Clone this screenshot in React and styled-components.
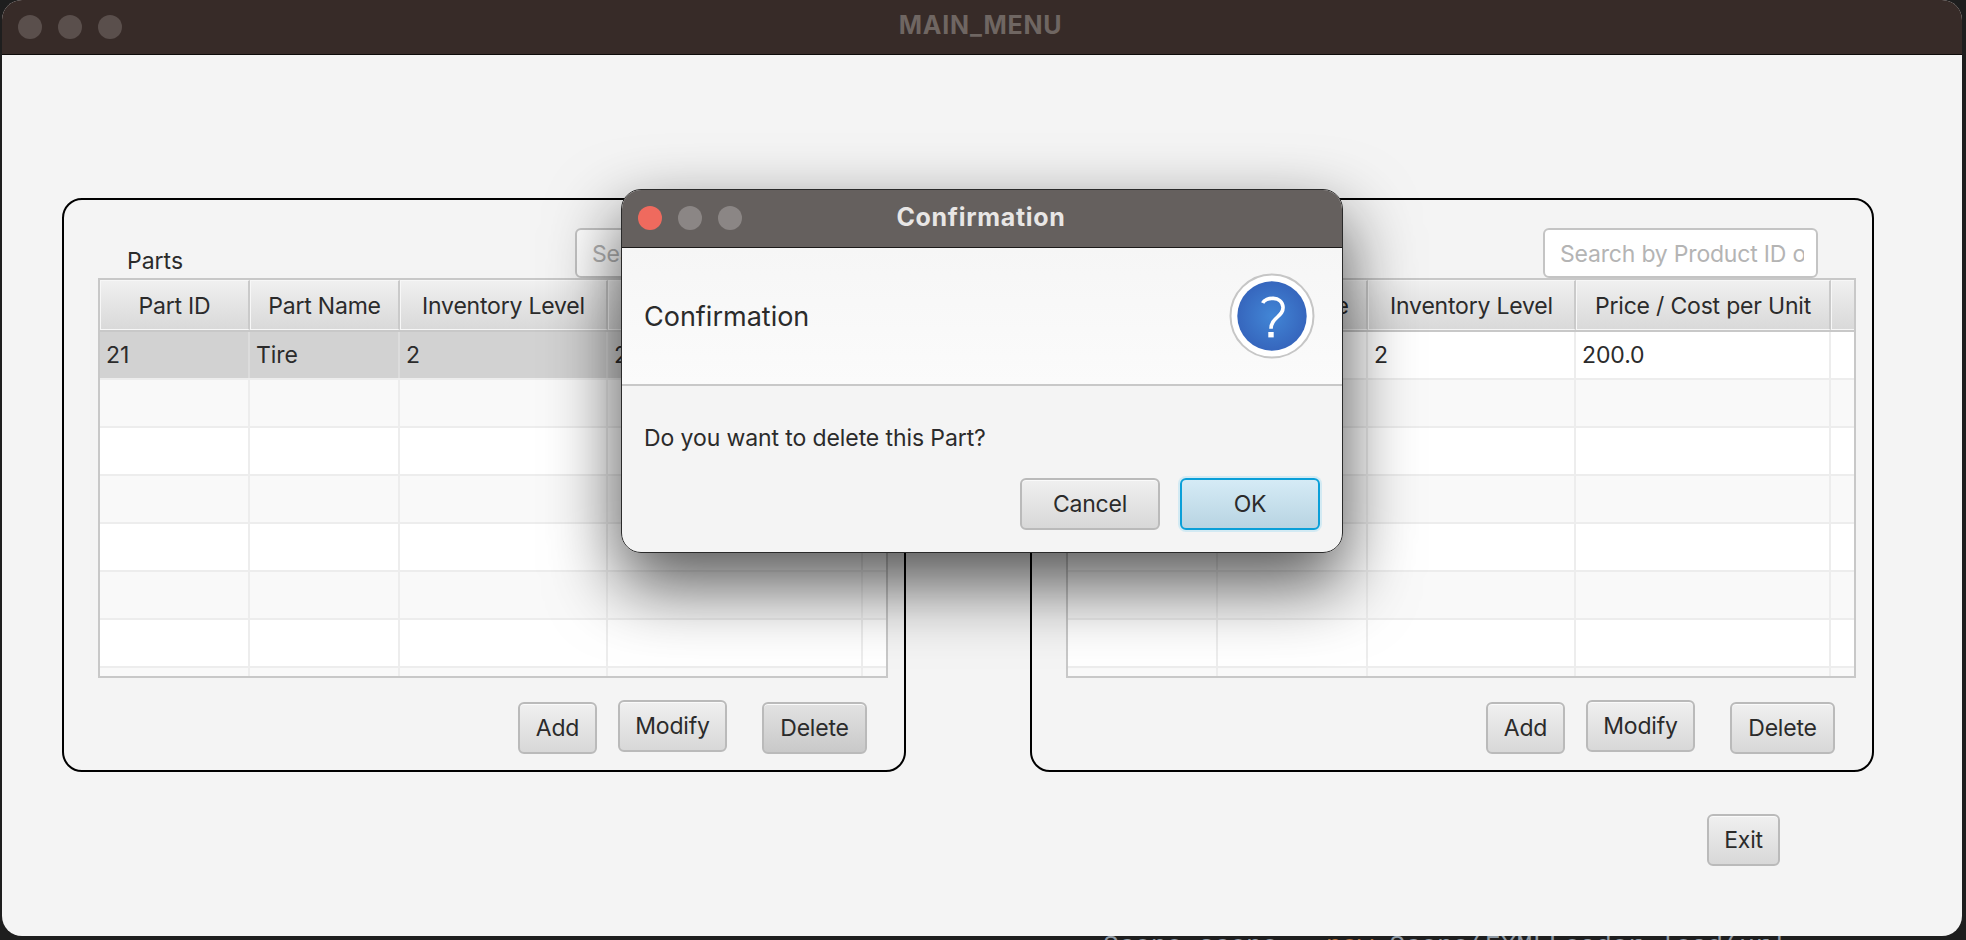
import React from "react";
import styled, { createGlobalStyle } from "styled-components";

const FONT = `Inter, "Liberation Sans", sans-serif`;

const GlobalStyle = createGlobalStyle`
    html, body {
        margin: 0;
        padding: 0;
        background: #1e1e1e;
    }
    body {
        width: 1966px;
        height: 940px;
        overflow: hidden;
        font-family: ${FONT};
    }
`;

const Desktop = styled.div`
    width: 1966px;
    height: 940px;
    overflow: hidden;
    background: #1e1e1e;
`;

const Window = styled.div`
    position: relative;
    box-sizing: border-box;
    width: 1960px;
    height: 936px;
    margin: 0 2px;
    overflow: hidden;
    background: #f4f4f4;
    border-radius: 20px;
    display: flex;
    flex-direction: column;
`;

const TitleBar = styled.header`
    box-sizing: border-box;
    height: 55px;
    flex: none;
    padding-left: 16px;
    background: #372b28;
    border-bottom: 1px solid #0e0b0a;
    display: grid;
    grid-template-columns: 1fr auto 1fr;
    align-items: center;
`;

const Dots = styled.div`
    display: flex;
    gap: 16px;
`;

const Dot = styled.span`
    width: 24px;
    height: 24px;
    border-radius: 50%;
    background: ${props => props.$color};
`;

const WindowTitle = styled.div`
    padding: 0 19px 5px 0;
    font-size: 25px;
    font-weight: 700;
    letter-spacing: 0.7px;
    color: #6f6662;
`;

const Content = styled.main`
    flex: 1;
    padding: 143px 0 0 60px;
`;

const Panels = styled.div`
    display: flex;
    gap: 124px;
`;

const Panel = styled.section`
    box-sizing: border-box;
    flex: none;
    width: 844px;
    height: 574px;
    padding: 28px 16px 0 34px;
    border: 2px solid #000;
    border-radius: 20px;
`;

const PanelTop = styled.div`
    height: 50px;
    display: flex;
    align-items: flex-end;
    justify-content: space-between;
    padding-right: 38px;
`;

const PanelLabel = styled.div`
    margin: 0 0 4px 29px;
    font-size: 23px;
    line-height: 26px;
    color: #2b2b2b;
`;

const Search = styled.input`
    box-sizing: border-box;
    flex: none;
    width: 275px;
    height: 50px;
    padding: 2px 12px 0 15px;
    border: 2px solid #c4c4c4;
    border-radius: 6px;
    background: #fff;
    font-family: ${FONT};
    font-size: 23px;
    letter-spacing: -0.2px;
    outline: none;

    &::placeholder {
        color: #b4b4b4;
        opacity: 1;
    }
`;

const Table = styled.div`
    box-sizing: border-box;
    width: 790px;
    height: 400px;
    overflow: hidden;
    border: 2px solid #c8c8c8;
    background: #fff;
`;

const COLUMNS = "150px 150px 208px 255px 23px";

const HeaderRow = styled.div`
    display: grid;
    grid-template-columns: ${COLUMNS};
    height: 52px;
    box-sizing: border-box;
    border-bottom: 2px solid #c8c8c8;
`;

const HeaderCell = styled.div`
    box-sizing: border-box;
    padding-top: 1px;
    display: flex;
    align-items: center;
    justify-content: center;
    white-space: nowrap;
    overflow: hidden;
    font-size: 23px;
    letter-spacing: -0.2px;
    color: #2b2b2b;
    background: linear-gradient(#f0f0f0, #d9d9d9);
    border: 1px solid #f7f7f7;
    border-right: 2px solid #cacaca;

    &:last-child {
        border-right: 0;
    }
`;

const Row = styled.div`
    display: grid;
    grid-template-columns: ${COLUMNS};
    height: 48px;
    box-sizing: border-box;
    border-bottom: 2px solid #ededed;
    background: ${props =>
        props.$selected ? "#d2d2d2" : props.$odd ? "#f9f9f9" : "#fff"};
`;

const Cell = styled.div`
    box-sizing: border-box;
    padding-left: 6px;
    display: flex;
    align-items: center;
    white-space: nowrap;
    overflow: hidden;
    font-size: 23px;
    letter-spacing: -0.1px;
    color: #2b2b2b;
    border-right: 2px solid ${props => (props.$selected ? "#dcdcdc" : "#ededed")};

    &:last-child {
        border-right: 0;
    }
`;

const PanelButtons = styled.div`
    display: flex;
    justify-content: flex-end;
    align-items: flex-start;
    padding: 24px 21px 0 0;
`;

const Button = styled.button`
    box-sizing: border-box;
    flex: none;
    width: ${props => props.$width}px;
    height: 52px;
    margin: ${props => props.$margin || "0"};
    padding: 0;
    border: 2px solid #bababa;
    border-radius: 6px;
    font-family: ${FONT};
    font-size: 23px;
    letter-spacing: -0.2px;
    color: #2b2b2b;
    background: ${props =>
        props.$hover
            ? "linear-gradient(#e2e2e2, #c9c9c9)"
            : "linear-gradient(#f0f0f0, #d8d8d8)"};
    box-shadow: inset 0 1px 0 #fafafa;
`;

const ExitRow = styled.div`
    display: flex;
    justify-content: flex-end;
    padding: 42px 182px 0 0;
`;

const DialogShadow = styled.div`
    position: absolute;
    left: 619px;
    top: 189px;
    width: 722px;
    height: 364px;
    border-radius: 20px;
    box-shadow: 0 30px 70px 2px rgba(0, 0, 0, 0.66);
`;

const Dialog = styled.div`
    position: absolute;
    left: 619px;
    top: 189px;
    box-sizing: border-box;
    width: 722px;
    height: 364px;
    display: flex;
    flex-direction: column;
    overflow: hidden;
    background: #f4f4f4;
    border: 1px solid #2a2a2a;
    border-radius: 20px;
`;

const DialogBar = styled.div`
    box-sizing: border-box;
    height: 58px;
    flex: none;
    padding: 0 0 1px 16px;
    background: #65605e;
    border-bottom: 1px solid #1c1a19;
    display: grid;
    grid-template-columns: 1fr auto 1fr;
    align-items: center;
`;

const DialogTitle = styled.div`
    padding: 0 18px 2px 0;
    font-size: 25px;
    font-weight: 700;
    letter-spacing: 0.7px;
    color: #e8e6e5;
`;

const Masthead = styled.div`
    box-sizing: border-box;
    height: 138px;
    flex: none;
    padding: 0 27px 0 22px;
    display: flex;
    align-items: center;
    justify-content: space-between;
    background: linear-gradient(#f6f6f6, #fbfbfb);
    border-bottom: 2px solid #c8c8c8;
    font-size: 27px;
    color: #2b2b2b;
`;

const Message = styled.div`
    height: 92px;
    box-sizing: border-box;
    padding: 39px 0 0 22px;
    font-size: 23px;
    line-height: 26px;
    letter-spacing: -0.1px;
    color: #2b2b2b;
`;

const DialogButtons = styled.div`
    display: flex;
    justify-content: flex-end;
    gap: 20px;
    padding-right: 22px;
`;

const DefaultButton = styled(Button)`
    border-color: #0a9fd8;
    background: linear-gradient(#d5ebf6, #b8d4e2);
    box-shadow: 0 0 0 2px rgba(150, 215, 240, 0.35);
`;

const CodeStrip = styled.div`
    height: 4px;
    overflow: hidden;
    padding-left: 1103px;
    font-family: "Liberation Mono", monospace;
    font-size: 26.5px;
    line-height: 4px;
    white-space: pre;
    color: #8f9aa5;

    b {
        font-weight: 400;
        color: #b5713a;
    }

    span {
        display: block;
        margin-top: 8px;
    }
`;

const QuestionIcon = () => (
    <svg width="86" height="86" viewBox="0 0 86 86">
        <defs>
            <radialGradient id="questionFill">
                <stop offset="0" stopColor="#4286d6" />
                <stop offset="1" stopColor="#3666bd" />
            </radialGradient>
        </defs>
        <circle cx="43" cy="43" r="41.5" fill="#fff" stroke="#c6c6c6" strokeWidth="2" />
        <circle cx="43" cy="43" r="34.7" fill="url(#questionFill)" />
        <path
            d="M33.7 30C36.3 24 53 22.3 54 34C54.7 44 42 44 42 55.7"
            fill="none"
            stroke="#fff"
            strokeWidth="3.6"
        />
        <rect x="39.3" y="59" width="5.4" height="5.4" fill="#fff" />
    </svg>
);

const columns = ["Part ID", "Part Name", "Inventory Level", "Price / Cost per Unit", ""];

const rows = [0, 1, 2, 3, 4, 5, 6, 7];

const DataTable = ({ first, selected }) => (
    <Table>
        <HeaderRow>
            {columns.map((name, i) => (
                <HeaderCell key={i}>{name}</HeaderCell>
            ))}
        </HeaderRow>
        {rows.map(r => (
            <Row key={r} $odd={r % 2 === 1} $selected={selected && r === 0}>
                {first.map((value, i) => (
                    <Cell key={i} $selected={selected && r === 0}>
                        {r === 0 ? value : ""}
                    </Cell>
                ))}
            </Row>
        ))}
    </Table>
);

const TablePanel = ({ label, placeholder, first, selected, hoverDelete }) => (
    <Panel>
        <PanelTop>
            <PanelLabel>{label}</PanelLabel>
            <Search readOnly placeholder={placeholder} />
        </PanelTop>
        <DataTable first={first} selected={selected} />
        <PanelButtons>
            <Button $width={79}>Add</Button>
            <Button $width={109} $margin="-2px 35px 0 21px">
                Modify
            </Button>
            <Button $width={105} $hover={hoverDelete}>
                Delete
            </Button>
        </PanelButtons>
    </Panel>
);

const App = () => (
    <Desktop>
        <GlobalStyle />
        <Window>
            <TitleBar>
                <Dots>
                    <Dot $color="#5a4f4c" />
                    <Dot $color="#5a4f4c" />
                    <Dot $color="#5a4f4c" />
                </Dots>
                <WindowTitle>MAIN_MENU</WindowTitle>
            </TitleBar>
            <Content>
                <Panels>
                    <TablePanel
                        label="Parts"
                        placeholder="Search by Part ID or Name"
                        first={["21", "Tire", "2", "200.0", ""]}
                        selected
                        hoverDelete
                    />
                    <TablePanel
                        label=""
                        placeholder="Search by Product ID or Name"
                        first={["", "", "2", "200.0", ""]}
                    />
                </Panels>
                <ExitRow>
                    <Button $width={73}>Exit</Button>
                </ExitRow>
            </Content>
            <DialogShadow />
            <Dialog>
                <DialogBar>
                    <Dots>
                        <Dot $color="#ef6a5e" />
                        <Dot $color="#8b8685" />
                        <Dot $color="#8b8685" />
                    </Dots>
                    <DialogTitle>Confirmation</DialogTitle>
                </DialogBar>
                <Masthead>
                    Confirmation
                    <QuestionIcon />
                </Masthead>
                <Message>Do you want to delete this Part?</Message>
                <DialogButtons>
                    <Button $width={140}>Cancel</Button>
                    <DefaultButton $width={140}>OK</DefaultButton>
                </DialogButtons>
            </Dialog>
        </Window>
        <CodeStrip>
            <span>
                Scene scene = <b>new</b> Scene(FXMLLoader.load(url
            </span>
        </CodeStrip>
    </Desktop>
);

export default App;
